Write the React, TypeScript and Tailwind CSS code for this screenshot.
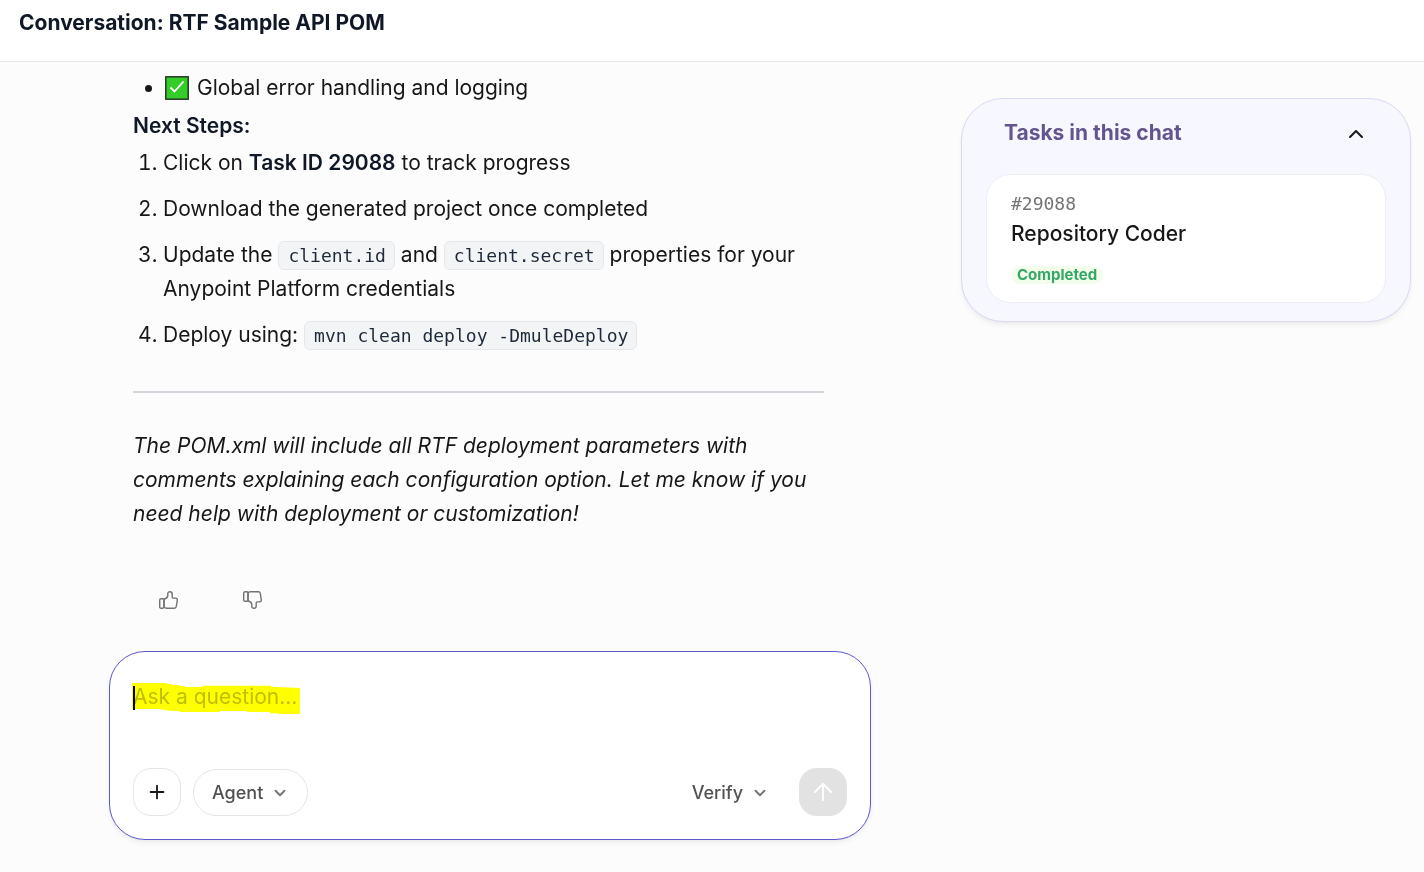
import React, { type FC as ReactFC, type ReactNode } from 'react';
import { ArrowUp, ChevronDown, ChevronUp, Plus } from 'lucide-react';

const CheckBoxMark = () => (
  <svg viewBox="0 0 24 24" className="mr-2 inline-block size-6 align-[-5px]" role="img" aria-label="Done">
    <rect x="0.8" y="0.8" width="22.4" height="22.4" fill="#33cc29" stroke="#1f2a1f" strokeWidth="1.4" />
    <path d="M5.5 11.5 9.5 15.5 18.5 5.5" fill="none" stroke="#fff" strokeWidth="1.8" />
  </svg>
);

const ThumbIcon: ReactFC<{ down?: boolean }> = ({ down }) => (
  <svg
    viewBox="0 0 19 18"
    className={down ? 'h-[18px] w-[19px] -scale-y-100' : 'h-[18px] w-[19px]'}
    fill="none"
    stroke="currentColor"
    strokeWidth="1.4"
    strokeLinejoin="round"
    aria-hidden="true"
  >
    <path d="M5 8.2V16.2Q4.6 17.2 3.6 17.2H2Q.7 17.2.7 15.9V9Q.7 7.7 2 7.7H3.8Q5 7.7 5 8.2Z" />
    <path d="M5 8.2C7.3 7.6 8.6 6.4 8.8 4.6V2.6C8.8 1.4 9.7.7 10.9.7C12.3.7 13.2 1.6 13.2 3V6.2Q13.2 7.1 14.1 7.1H16.5Q18.5 7.2 18.3 9.2L17.3 15.5Q17 17.2 15.3 17.2H7.3Q5.6 17.2 5 15.8Z" />
  </svg>
);

const Code: ReactFC<{ children: ReactNode }> = ({ children }) => (
  <code className="inline-block rounded-md border border-gray-200 bg-gray-100 pt-1 pr-2 pb-[3px] pl-[9px] font-['DejaVu_Sans_Mono',monospace] text-lg/5 text-gray-800">
    {children}
  </code>
);

const Message = () => (
  <article className="pr-[47px] pl-6 text-[21px]/[34px]">
    <ul className="list-disc pl-8">
      <li className="h-[34px]">
        <CheckBoxMark />
        Global error handling and logging
      </li>
    </ul>
    <h2 className="mt-1 font-semibold text-gray-900">Next Steps:</h2>
    <ol className="mt-[3px] flex list-decimal flex-col gap-3 pl-[30px]">
      <li>
        Click on <strong className="font-semibold text-gray-900">Task ID 29088</strong> to track progress
      </li>
      <li>Download the generated project once completed</li>
      <li>
        Update the <Code>client.id</Code> and <Code>client.secret</Code> properties for your Anypoint
        Platform credentials
      </li>
      <li>
        Deploy using: <Code>mvn clean deploy -DmuleDeploy</Code>
      </li>
    </ol>
    <hr className="mt-[39px] mb-9 border-t-2 border-gray-300" />
    <p className="italic">
      The POM.xml will include all RTF deployment parameters with comments explaining each
      configuration option. Let me know if you need help with deployment or customization!
    </p>
    <div className="mt-[45px] flex gap-9 pl-[11px] text-neutral-500">
      <button type="button" aria-label="Good response" className="flex size-12 items-center justify-center">
        <ThumbIcon />
      </button>
      <button type="button" aria-label="Bad response" className="flex size-12 items-center justify-center">
        <ThumbIcon down />
      </button>
    </div>
  </article>
);

const Composer = () => (
  <form className="mt-[27px] rounded-[36px] border border-[#5b57cf] bg-white px-[23px] pt-7 pb-[23px] shadow-md shadow-black/5">
    <div className="relative">
      <textarea
        aria-label="Ask a question"
        placeholder="Ask a question..."
        rows={2}
        className="block h-[88px] w-full resize-none text-[21px]/[34px] outline-none placeholder:text-[#bfbfbf]"
      />
      {/* marker stroke over the prompt */}
      <svg
        viewBox="0 0 504 93"
        className="pointer-events-none absolute top-[3px] -left-px h-[31px] w-[168px] mix-blend-multiply"
        aria-hidden="true"
      >
        <path
          fill="#ff0"
          d="M0 0H104L106 3H119L120 6H144V9H158V12H210V8H417V11L434 12L504 15V93H438V91H414V87H344V84H264V87H144V85L114 83L96 81L84 78H0Z"
        />
      </svg>
      <span className="pointer-events-none absolute top-[6px] left-0 h-6 w-0.5 bg-black" />
    </div>
    <div className="flex items-center text-lg text-neutral-600">
      <button
        type="button"
        aria-label="Add"
        className="flex size-12 items-center justify-center rounded-[18px] border border-neutral-200 text-neutral-900"
      >
        <Plus className="size-[22px]" />
      </button>
      <button
        type="button"
        className="ml-3 flex h-[47px] items-center gap-2 rounded-full border border-neutral-200 px-[18px] pt-px font-medium"
      >
        Agent
        <ChevronDown className="size-[18px] text-neutral-500" strokeWidth={2.5} />
      </button>
      <button type="button" className="ml-auto flex h-12 items-center gap-2 pt-px font-medium">
        Verify
        <ChevronDown className="size-[18px] text-neutral-500" strokeWidth={2.5} />
      </button>
      <button
        type="button"
        disabled
        aria-label="Send"
        className="ml-[30px] flex size-12 items-center justify-center rounded-[18px] bg-[#e2e2e2] text-white"
      >
        <ArrowUp className="size-7" strokeWidth={1.6} />
      </button>
    </div>
  </form>
);

const TasksPanel = () => (
  <aside className="mt-9 w-[450px] shrink-0 self-start rounded-[42px] border border-[#d9d8f5] bg-[#f7f7ff] px-6 pb-[18px] shadow-md shadow-black/5">
    <div className="flex h-[75px] items-start justify-between px-[18px] pt-[17px]">
      <h2 className="text-[21px]/[34px] font-bold text-[#65558f]">Tasks in this chat</h2>
      <button type="button" aria-label="Collapse tasks" className="flex h-9 items-center text-neutral-900">
        <ChevronUp className="size-6" />
      </button>
    </div>
    <section className="rounded-3xl border border-[#ededf3] bg-white px-6 pt-[17px] pb-[18px]">
      <p className="font-['DejaVu_Sans_Mono',monospace] text-lg/6 text-neutral-500">#29088</p>
      <h3 className="mt-px text-[21px]/[34px] font-medium">Repository Coder</h3>
      <span className="mt-[15px] block w-fit rounded-full bg-[#f3fdec] px-1.5 text-[15px]/[18px] font-bold text-[#35a865]">
        Completed
      </span>
    </section>
  </aside>
);

const App = () => (
  <div className="flex min-h-screen flex-col bg-[#fcfcfc] font-[Inter,sans-serif] text-neutral-900">
    <header className="border-b border-gray-200 bg-white px-[19px] pt-[6px] pb-[21px]">
      <h1 className="text-[21px]/[34px] font-bold text-gray-900">Conversation: RTF Sample API POM</h1>
    </header>
    <div className="flex flex-1 gap-[90px] pr-[13px]">
      <main className="min-w-0 flex-1 pt-[9px] pb-8 pl-[109px]">
        <Message />
        <Composer />
      </main>
      <TasksPanel />
    </div>
  </div>
);

export default App;
